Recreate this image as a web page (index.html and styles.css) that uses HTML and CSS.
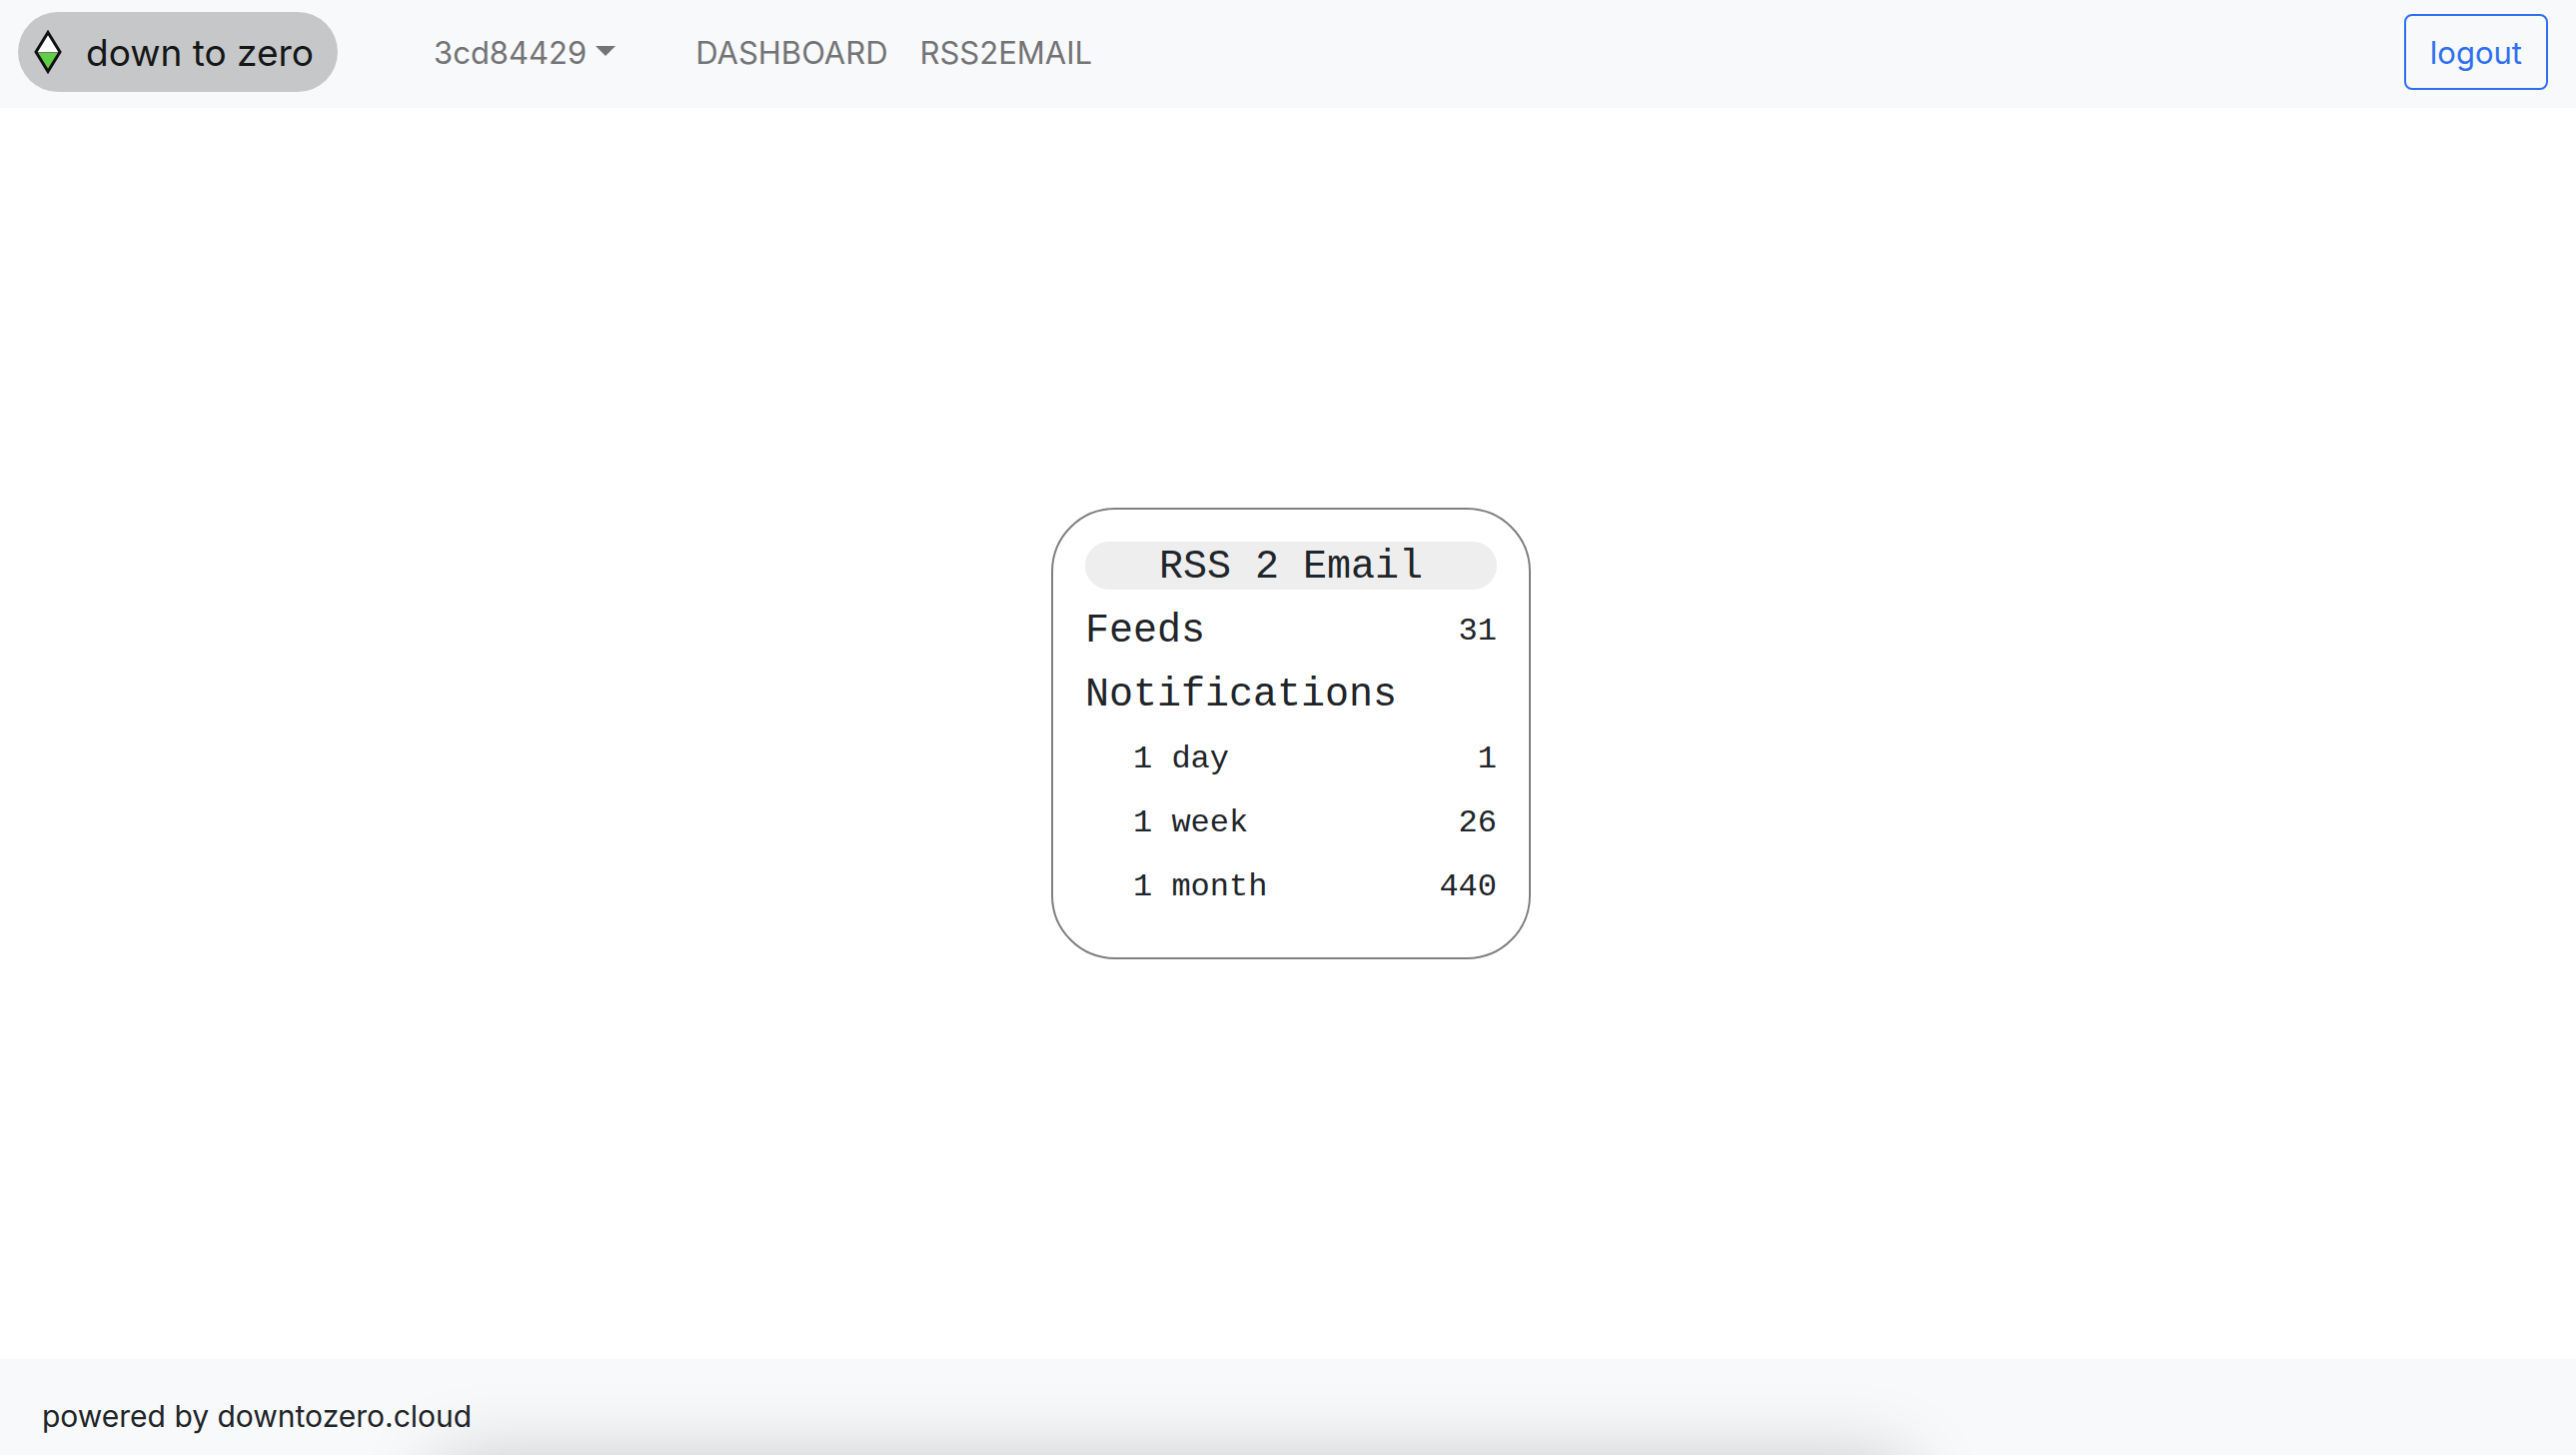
FILE: index.html
```html
<!DOCTYPE html>
<html lang="en">
<head>
<meta charset="utf-8">
<title>down to zero</title>
<link rel="stylesheet" href="styles.css">
</head>
<body>
<header class="navbar">
  <a class="brand" href="#">
    <svg class="brand-logo" viewBox="0 0 28 44" aria-hidden="true">
      <path d="M14 2 L26 22 H2 Z" fill="#fff"/>
      <path d="M2 22 H26 L14 42 Z" fill="#5fd045"/>
      <path d="M2 22.500 H26" stroke="#777" stroke-width="1"/>
      <path d="M14 2.500 L26 22 L14 41.500 L2 22 Z" fill="none" stroke="#111" stroke-width="3"/>
    </svg>
    <span>down to zero</span>
  </a>
  <nav class="nav">
    <button class="account" type="button">3cd84429</button>
    <a class="nav-link" href="#">DASHBOARD</a>
    <a class="nav-link" href="#">RSS2EMAIL</a>
  </nav>
  <button class="logout" type="button">logout</button>
</header>
<main class="content">
  <section class="card">
    <h1 class="card-title">RSS 2 Email</h1>
    <dl class="stats">
      <div class="row"><dt class="heading">Feeds</dt><dd>31</dd></div>
      <div class="row"><dt class="heading">Notifications</dt></div>
      <div class="row"><dt class="period">1 day</dt><dd>1</dd></div>
      <div class="row"><dt class="period">1 week</dt><dd>26</dd></div>
      <div class="row"><dt class="period">1 month</dt><dd>440</dd></div>
    </dl>
  </section>
</main>
<footer class="footer">powered by downtozero.cloud</footer>
</body>
</html>
```
FILE: styles.css
```css
* { box-sizing: border-box; }

body {
  margin: 0;
  min-height: 100vh;
  display: flex;
  flex-direction: column;
  background: #fff;
  color: #212529;
  font: 31px/48px Inter, "Liberation Sans", sans-serif;
}

.navbar {
  display: flex;
  align-items: center;
  padding: 12px 28px 16px 18px;
  background: #f8f9fb;
}

.brand {
  display: flex;
  align-items: center;
  gap: 24px;
  height: 80px;
  padding: 0 24px 0 16px;
  border-radius: 40px;
  background: #c6c7c9;
  color: #151717;
  font-size: 37px;
  text-decoration: none;
}

.brand span { padding-top: 2px; }

.brand-logo {
  width: 28px;
  height: 44px;
}

.nav {
  display: flex;
  align-items: center;
  gap: 32px;
  margin-left: 96px;
  padding-top: 2px;
}

.account,
.nav-link {
  color: #737475;
  font: inherit;
  text-decoration: none;
}

.account {
  display: flex;
  align-items: center;
  gap: 9px;
  margin-right: 48px;
  padding: 0;
  border: 0;
  background: none;
}

.account::after {
  content: "";
  margin-bottom: 4px;
  border: 10px solid transparent;
  border-top-color: currentColor;
  border-bottom: 0;
}

.logout {
  margin-left: auto;
  padding: 13px 24px 11px;
  border: 2px solid #2f6ff2;
  border-radius: 8px;
  background: transparent;
  color: #2f6ff2;
  font: inherit;
}

.content {
  flex: 1;
  display: flex;
  align-items: center;
  justify-content: center;
  padding-left: 6px;
}

.card {
  width: 480px;
  padding: 32px;
  border: 2px solid #808080;
  border-radius: 64px;
  font-family: "Courier New", "Liberation Mono", monospace;
  font-size: 32px;
}

.card-title {
  margin: 0 0 16px;
  padding-top: 3px;
  border-radius: 24px;
  background: #eee;
  font-size: 40px;
  font-weight: 400;
  line-height: 45px;
  text-align: center;
}

.stats { margin: 0; }

.row {
  display: flex;
  justify-content: space-between;
  align-items: center;
  height: 48px;
  margin-bottom: 16px;
  padding-top: 4px;
}

.row dd { margin: 0; }

.heading { font-size: 40px; }

.period { padding-left: 48px; }

.footer {
  position: relative;
  overflow: hidden;
  padding: 33px 42px 15px;
  background: #f8f9fb;
  font-size: 30px;
}

.footer::after {
  content: "";
  position: absolute;
  top: 100%;
  left: 17%;
  right: 26%;
  height: 160px;
  border-radius: 20px;
  box-shadow: 0 8px 80px rgba(0, 0, 0, 0.22);
}
```
